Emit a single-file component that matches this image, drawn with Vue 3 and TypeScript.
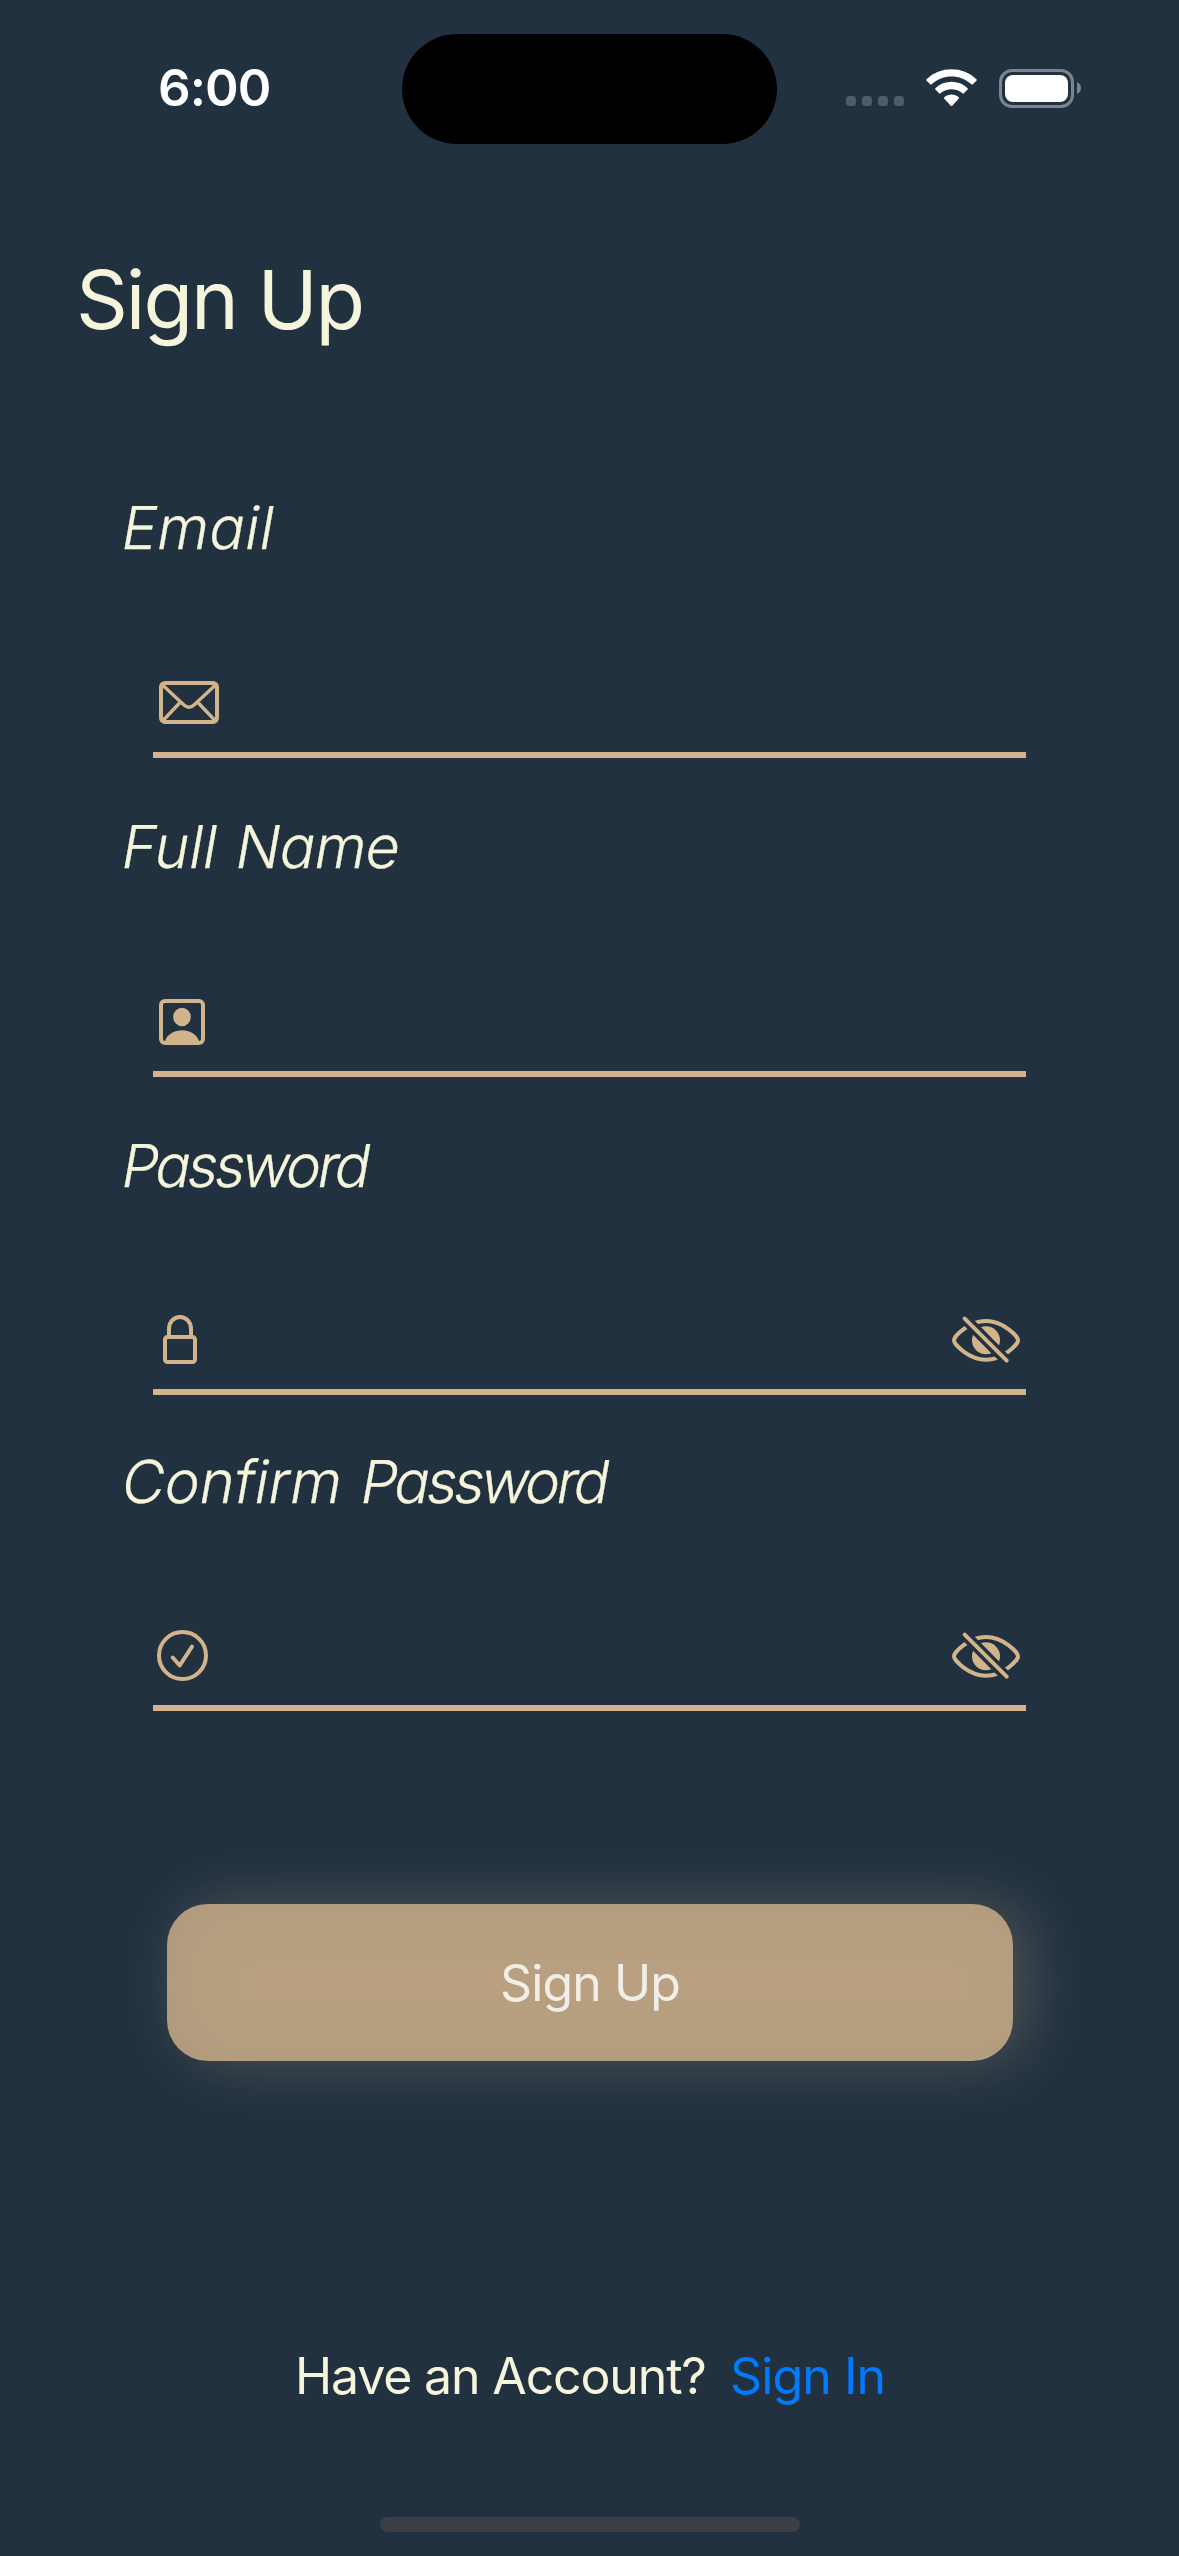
<script setup lang="ts">
import { ref } from 'vue'

type IconName = 'mail' | 'person' | 'lock' | 'check'

interface Field {
  id: string
  label: string
  icon: IconName
  secure: boolean
}

const fields: Field[] = [
  { id: 'email', label: 'Email', icon: 'mail', secure: false },
  { id: 'name', label: 'Full Name', icon: 'person', secure: false },
  { id: 'password', label: 'Password', icon: 'lock', secure: true },
  { id: 'confirm', label: 'Confirm Password', icon: 'check', secure: true },
]

const values = ref<Record<string, string>>({ email: '', name: '', password: '', confirm: '' })
</script>

<template>
  <div class="screen">
    <header class="status">
      <span class="time">6:00</span>
      <div class="island"></div>
      <div class="indicators">
        <div class="dots"><i></i><i></i><i></i><i></i></div>
        <svg class="wifi" width="51" height="38" viewBox="0 0 51 38">
          <g fill="#fff">
            <path d="M.6 10.3C14-3 37-3 50.4 10.3q.7.7 0 1.4l-3.6 3.6q-.7.7-1.4 0C34.200 4.900 16.800 4.900 5.600 15.300q-.7.7-1.400 0L.6 11.700q-.7-.7 0-1.400z" />
            <path d="M9.400 19.200C18.500 10.700 32.500 10.700 41.600 19.200q.7.700 0 1.400l-3.700 3.700q-.7.700-1.400 0C30.300 18.900 20.700 18.900 14.500 24.300q-.7.700-1.400 0l-3.700-3.700q-.7-.7 0-1.400z" />
            <path d="M18.300 28.200C22.300 24.600 28.700 24.600 32.700 28.200q.8.700 0 1.500l-6.500 7q-.7.700-1.400 0l-6.500-7q-.8-.8 0-1.500z" />
          </g>
        </svg>
        <div class="battery">
          <div class="cell"><div class="charge"></div></div>
          <svg width="4" height="12" viewBox="0 0 4 12"><path d="M0 0Q4 2 4 6T0 12z" fill="#7c858e" /></svg>
        </div>
      </div>
    </header>

    <h1 class="title">Sign Up</h1>

    <form class="form" @submit.prevent>
      <div v-for="f in fields" :key="f.id" class="field" :class="f.id">
        <label :for="f.id">
          <span v-for="word in f.label.split(' ')" :key="word" :class="word.toLowerCase() + '-word'">{{ word }}</span>
        </label>
        <div class="row">
          <svg class="icon" width="70" height="60" viewBox="0 0 70 60" fill="none" stroke="#d2b48c" stroke-width="4">
            <template v-if="f.icon === 'mail'">
              <rect x="8" y="11" width="56" height="39" rx="4" />
              <path d="M9.500 13L31 33Q36 37.500 41 33L62.500 13M10 48.500L27.500 30M62 48.500L44.500 30" stroke-width="3.400" />
            </template>
            <template v-else-if="f.icon === 'person'">
              <rect x="8" y="10" width="42" height="42" rx="4" />
              <ellipse cx="29" cy="26" rx="8.800" ry="9.300" fill="#d2b48c" stroke="none" />
              <path d="M12 50C17 35.700 41 35.700 46 50V53H12z" fill="#d2b48c" stroke="none" />
            </template>
            <template v-else-if="f.icon === 'lock'">
              <rect x="12" y="28" width="30" height="25" rx="2.500" />
              <path d="M16 28V19.500a11 11.500 0 0 1 22 0V28" />
            </template>
            <template v-else>
              <circle cx="29.500" cy="30.500" r="23.500" />
              <path d="M19.700 32.500L26.700 40.500L39 21.700" stroke-linecap="round" stroke-linejoin="round" />
            </template>
          </svg>
          <input :id="f.id" v-model="values[f.id]" :type="f.secure ? 'password' : 'text'" />
          <svg v-if="f.secure" class="icon" width="80" height="60" viewBox="0 0 80 60" fill="none" stroke="#d2b48c" stroke-width="4">
            <mask :id="'slash-' + f.id" maskUnits="userSpaceOnUse" x="0" y="0" width="80" height="60">
              <rect width="80" height="60" fill="#fff" stroke="none" />
              <path d="M12.700 3.300L66.700 58" stroke="#000" stroke-width="11" />
            </mask>
            <g :mask="`url(#slash-${f.id})`">
              <path d="M8 31.300C8 27 23 12 40 12S72 27 72 31.300S57 50.700 40 50.700S8 35.600 8 31.300z" />
              <circle cx="40" cy="31.300" r="14" fill="#d2b48c" stroke="none" />
            </g>
            <path d="M18.700 9.700L60.700 51.700" stroke-linecap="round" />
          </svg>
        </div>
      </div>
      <button class="submit" type="submit"><span>Sign Up</span></button>
    </form>

    <footer class="footer">
      <span class="ask">Have an Account?</span>
      <a class="link">Sign In</a>
    </footer>
    <div class="home"></div>
  </div>
</template>

<style>
html,
body {
  background: #223140;
}
</style>

<style scoped>
.screen {
  width: 1179px;
  height: 2556px;
  overflow: hidden;
  box-sizing: border-box;
  background: #223140;
  color: #f5f5dc;
  font-family: Inter, "Liberation Sans", sans-serif;
  display: flex;
  flex-direction: column;
}
.status {
  height: 176px;
  flex: none;
  display: grid;
  grid-template-columns: 402px 375px 402px;
  align-items: center;
}
.time {
  color: #fff;
  font-size: 51px;
  font-weight: 600;
  line-height: 60px;
  padding-left: 158px;
  letter-spacing: -0.9px;
}
.island {
  height: 110px;
  margin-top: 2px;
  border-radius: 55px;
  background: #000;
}
.indicators {
  display: flex;
  align-items: center;
  padding-left: 69px;
}
.dots {
  display: flex;
  gap: 6px;
  margin: 26px 22px 0 0;
}
.dots i {
  width: 10px;
  height: 10px;
  border-radius: 3.5px;
  background: #505b67;
}
.wifi {
  margin-right: 22px;
}
.battery {
  display: flex;
  align-items: center;
  gap: 3px;
}
.cell {
  box-sizing: border-box;
  width: 75px;
  height: 39px;
  padding: 3px;
  border: 3px solid #7c858e;
  border-radius: 13px;
}
.charge {
  height: 27px;
  border-radius: 8px;
  background: #fff;
}
.title {
  margin: 74px 0 0 76px;
  font-size: 81px;
  line-height: 100px;
  font-weight: 400;
  letter-spacing: -2.1px;
}
.form {
  margin-top: 136px;
}
.field {
  margin-bottom: 47px;
}
/* Slanted upright letterforms with the single-storey a */
.field label {
  display: flex;
  gap: 19px;
  height: 80px;
  margin-left: 119px;
  font-family: Inter, sans-serif;
  font-feature-settings: "cv11" 1;
  font-weight: 300;
  font-size: 59px;
  line-height: 84px;
  white-space: nowrap;
  -webkit-text-stroke: 0.3px #f5f5dc;
  transform: skewX(-10deg);
  transform-origin: 0 63px;
}
.email-word {
  letter-spacing: 0.5px;
}
.name-word {
  letter-spacing: -0.7px;
}
.password-word {
  letter-spacing: -3.2px;
}
.row {
  display: flex;
  align-items: flex-end;
  height: 192px;
  box-sizing: border-box;
  margin: 0 153px;
  padding-bottom: 20px;
  border-bottom: 6px solid #d2b48c;
}
.password {
  margin-bottom: 45px;
}
.password .row,
.confirm .row {
  height: 191px;
}
.confirm {
  margin-bottom: 193px;
}
.icon {
  flex: none;
}
input {
  flex: 1;
  min-width: 0;
  height: 60px;
  padding: 0;
  border: 0;
  outline: 0;
  background: transparent;
  color: inherit;
  font: 48px Inter, sans-serif;
}
.submit {
  position: relative;
  display: block;
  width: 846px;
  height: 157px;
  margin: 0 0 0 167px;
  padding: 0;
  border: 0;
  background: none;
  isolation: isolate;
  color: #f1ede7;
  font: 400 50px/60px Inter, sans-serif;
  letter-spacing: -0.9px;
}
/* Soft glow shifted to the right, visible through the translucent fill */
.submit::before {
  content: "";
  position: absolute;
  z-index: -2;
  inset: 0 -15px 0 15px;
  border-radius: 45px;
  background: rgba(210, 180, 140, 0.26);
  filter: blur(30px);
}
.submit::after {
  content: "";
  position: absolute;
  z-index: -1;
  inset: 0;
  border-radius: 41px;
  background: rgba(210, 180, 140, 0.8);
}
.footer {
  display: flex;
  margin: 285px 0 0 295px;
  font-size: 50px;
  line-height: 60px;
  letter-spacing: -1.15px;
  white-space: nowrap;
}
.ask {
  width: 435px;
}
.link {
  color: #007aff;
  letter-spacing: -0.9px;
}
.home {
  width: 420px;
  height: 15px;
  margin: 111px auto 0;
  border-radius: 8px;
  background: #3c4045;
}
</style>
